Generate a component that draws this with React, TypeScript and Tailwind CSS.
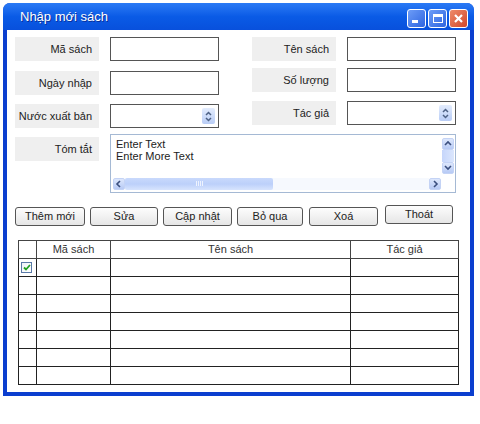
import React from "react";

const font = { fontFamily: '"Liberation Sans", Arial, sans-serif' };

const Spinner = () => (
  <div className="w-[13px] h-[16px] rounded-[2px] bg-gradient-to-b from-[#e3ecfd] to-[#b9cdf6] flex flex-col items-center justify-center gap-[1px]">
    <svg width="7" height="5" viewBox="0 0 7 5">
      <path d="M1 4 L3.5 1.5 L6 4" stroke="#4d6185" strokeWidth="1.5" fill="none" />
    </svg>
    <svg width="7" height="5" viewBox="0 0 7 5">
      <path d="M1 1 L3.5 3.5 L6 1" stroke="#4d6185" strokeWidth="1.5" fill="none" />
    </svg>
  </div>
);

const Label = ({ text }: { text: string }) => (
  <div className="w-[84px] h-[24px] bg-[#efefef] flex items-center justify-end pr-[7px] text-[11px] text-[#222]">
    {text}
  </div>
);

const Field = ({ text, spin, mt }: { text: string; spin?: boolean; mt: string }) => (
  <div className={`flex items-center gap-[11px] ${mt}`}>
    <Label text={text} />
    <div className="w-[109px] h-[24px] border border-[#555] bg-white flex items-center justify-end pr-[3px]">
      {spin && <Spinner />}
    </div>
  </div>
);

const Arrow = ({ dir }: { dir: "up" | "down" | "left" | "right" }) => {
  const d = {
    up: "M2 6 L5 3 L8 6",
    down: "M2 3 L5 6 L8 3",
    left: "M6 2 L3 5 L6 8",
    right: "M4 2 L7 5 L4 8",
  }[dir];
  return (
    <div className="w-[12px] h-[12px] rounded-[2px] bg-gradient-to-b from-[#dde7fc] to-[#b7caf5] border border-[#c4d3f5] flex items-center justify-center">
      <svg width="10" height="10" viewBox="0 0 10 10">
        <path d={d} stroke="#3b4f7e" strokeWidth="1.6" fill="none" />
      </svg>
    </div>
  );
};

const buttons = [
  { t: "Thêm mới", c: "w-[70px] mt-[2px]" },
  { t: "Sửa", c: "w-[68px] ml-[5px] mt-[2px]" },
  { t: "Cập nhật", c: "w-[69px] ml-[5px] mt-[2px]" },
  { t: "Bỏ qua", c: "w-[66px] ml-[5px] mt-[2px]" },
  { t: "Xoá", c: "w-[69px] ml-[6px] mt-[2px]" },
  { t: "Thoát", c: "w-[68px] ml-[7px]" },
];

export default function App() {
  return (
    <div className="w-[480px] h-[424px] bg-white pt-[3px] pl-[3px]" style={font}>
      <div className="w-[471px] h-[393px] flex flex-col rounded-t-[7px] bg-[#0b3ecf] overflow-hidden">
        {/* title bar */}
        <div className="h-[27px] shrink-0 flex items-center justify-between bg-gradient-to-b from-[#2a7af5] via-[#0a5be6] to-[#0850dc] pl-[17px] pr-[6px]">
          <span className="text-white text-[13px] mt-[1px] [text-shadow:1px_1px_0_#0a2f9a]">Nhập mới sách</span>
          <div className="flex gap-[2px] mt-[3px]">
            <div className="w-[19px] h-[19px] rounded-[3px] border border-white bg-gradient-to-br from-[#6d9cf7] to-[#2e64e0] flex items-end justify-start pl-[4px] pb-[4px]">
              <div className="w-[6px] h-[3px] bg-white" />
            </div>
            <div className="w-[19px] h-[19px] rounded-[3px] border border-white bg-gradient-to-br from-[#6d9cf7] to-[#2e64e0] flex items-center justify-center">
              <div className="w-[10px] h-[9px] border border-white border-t-[3px]" />
            </div>
            <div className="w-[19px] h-[19px] rounded-[3px] border border-white bg-gradient-to-br from-[#ee8a6a] to-[#d0462a] flex items-center justify-center">
              <svg width="11" height="11" viewBox="0 0 11 11">
                <path d="M2 2 L9 9 M9 2 L2 9" stroke="white" strokeWidth="2.2" />
              </svg>
            </div>
          </div>
        </div>
        {/* body */}
        <div className="flex-1 mx-[4px] mb-[4px] bg-white flex flex-col pt-[7px]">
          <div className="flex pl-[8px]">
            <div className="flex flex-col">
              <Field text="Mã sách" mt="mt-0" />
              <Field text="Ngày nhập" mt="mt-[10px]" />
              <Field text="Nước xuất bản" spin mt="mt-[9px]" />
            </div>
            <div className="flex flex-col ml-[33px]">
              <Field text="Tên sách" mt="mt-0" />
              <Field text="Số lượng" mt="mt-[7px]" />
              <Field text="Tác giả" spin mt="mt-[9px]" />
            </div>
          </div>

          {/* Tóm tắt */}
          <div className="flex items-start pl-[8px] mt-[6px] gap-[11px]">
            <div className="mt-[3px]">
              <Label text="Tóm tắt" />
            </div>
            <div className="w-[346px] h-[59px] border border-[#a5b9d4] bg-white flex flex-col">
              <div className="flex flex-1">
                <div className="flex-1 pl-[5px] pt-[3px] text-[11px] leading-[12px] text-[#222]">
                  <div>Enter Text</div>
                  <div>Enter More Text</div>
                </div>
                <div className="w-[14px] flex flex-col items-center pt-[3px]">
                  <Arrow dir="up" />
                  <div className="w-[12px] h-[12px] bg-gradient-to-r from-[#c6d6fb] to-[#dbe6fd]" />
                  <Arrow dir="down" />
                </div>
              </div>
              <div className="h-[13px] flex items-center pl-[2px] pr-[14px] mb-[2px]">
                <Arrow dir="left" />
                <div className="flex-1 h-[12px] flex bg-[#f6f9fe]">
                  <div className="w-[148px] h-full rounded-[2px] bg-gradient-to-b from-[#c9d9fc] via-[#bcd0fa] to-[#d7e4fd] flex items-center justify-center gap-[1px]">
                    <div className="w-[1px] h-[5px] bg-[#eef3fe]" />
                    <div className="w-[1px] h-[5px] bg-[#eef3fe]" />
                    <div className="w-[1px] h-[5px] bg-[#eef3fe]" />
                    <div className="w-[1px] h-[5px] bg-[#eef3fe]" />
                  </div>
                </div>
                <Arrow dir="right" />
              </div>
            </div>
          </div>

          {/* buttons */}
          <div className="flex items-start pl-[8px] mt-[12px]">
            {buttons.map((b) => (
              <button
                key={b.t}
                className={`${b.c} h-[19px] rounded-[3px] border border-[#555] bg-gradient-to-b from-[#fdfdfd] to-[#e6e6e6] text-[11px] text-[#222] flex items-center justify-center`}
              >
                {b.t}
              </button>
            ))}
          </div>

          {/* table */}
          <div className="ml-[11px] mt-[14px] w-[440px]">
            <table className="w-full table-fixed border-collapse border border-[#666] text-[11px] text-[#333]">
              <colgroup>
                <col className="w-[18px]" />
                <col className="w-[74px]" />
                <col className="w-[240px]" />
                <col className="w-[108px]" />
              </colgroup>
              <thead>
                <tr className="h-[18px]">
                  <th className="border border-[#444] font-normal"></th>
                  <th className="border border-[#444] font-normal">Mã sách</th>
                  <th className="border border-[#444] font-normal">Tên sách</th>
                  <th className="border border-[#444] font-normal">Tác giả</th>
                </tr>
              </thead>
              <tbody>
                {Array.from({ length: 7 }).map((_, i) => (
                  <tr key={i} className="h-[18px]">
                    <td className="border border-[#222] p-0">
                      {i === 0 && (
                        <div className="ml-[2px] w-[11px] h-[11px] border border-[#5a7aa8] bg-gradient-to-br from-[#eef2f7] to-[#ffffff] flex items-center justify-center">
                          <svg width="8" height="7" viewBox="0 0 8 7">
                            <path d="M1 3.5 L3 5.5 L7 1" stroke="#21a121" strokeWidth="1.8" fill="none" />
                          </svg>
                        </div>
                      )}
                    </td>
                    <td className="border border-[#222]"></td>
                    <td className="border border-[#222]"></td>
                    <td className="border border-[#222]"></td>
                  </tr>
                ))}
              </tbody>
            </table>
          </div>
        </div>
      </div>
    </div>
  );
}
